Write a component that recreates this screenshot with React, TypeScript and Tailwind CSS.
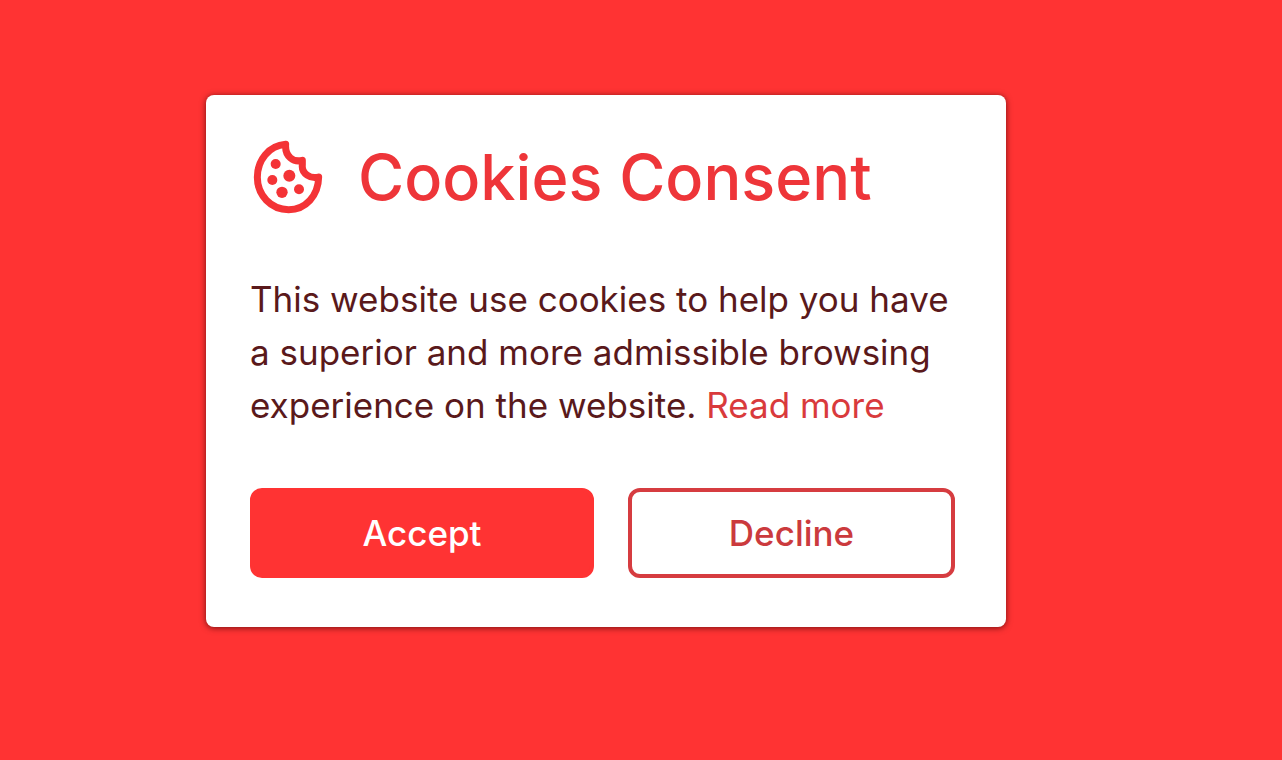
import type { ButtonHTMLAttributes } from "react";
import { clsx } from "clsx";

interface ConsentButtonProps extends ButtonHTMLAttributes<HTMLButtonElement> {
  variant: "primary" | "outline";
}

function ConsentButton({ variant, children, ...props }: ConsentButtonProps) {
  return (
    <button
      className={clsx(
        "h-[90px] cursor-pointer rounded-xl border-4 text-[35px] leading-none font-medium",
        variant === "primary" && "border-[#ff3333] bg-[#ff3333] text-white",
        variant === "outline" && "border-[#d63c40] bg-white text-[#cb3a3d]",
      )}
      type="button"
      {...props}
    >
      {children}
    </button>
  );
}

function CookieIcon() {
  return (
    <svg aria-hidden="true" className="h-[76px] w-[74px] shrink-0" fill="none" viewBox="168 162 222 228">
      <path
        d="M275 178C224 182 190 226 190 277C190 331 231 374 284 374C335 374 373 332 374 276C350 283 322 266 325 240L325 226C299 233 272 215 275 178Z"
        stroke="#f43336"
        strokeLinejoin="round"
        strokeWidth="21"
      />
      <g fill="#f43336">
        <circle cx="245" cy="237" r="15" />
        <circle cx="286" cy="272" r="18" />
        <circle cx="235" cy="285" r="15" />
        <circle cx="264" cy="322" r="17" />
        <circle cx="315" cy="313" r="15" />
      </g>
    </svg>
  );
}

export default function App() {
  return (
    <main className="min-h-screen bg-[#ff3333] pt-[95px] pr-[276px] pb-24 pl-[206px] font-['Inter',sans-serif]">
      <section
        aria-labelledby="consent-title"
        className="rounded-lg bg-white pt-[42px] pr-[51px] pb-[49px] pl-11 shadow-[0_1px_6px_rgba(60,0,0,0.7)]"
      >
        <header className="flex h-20 items-center gap-[34px]">
          <CookieIcon />
          <h1 className="text-[63px] leading-none font-medium whitespace-nowrap text-[#ee3539]" id="consent-title">
            Cookies Consent
          </h1>
        </header>

        <p className="mt-14 text-[35px] leading-[53px] text-[#5a191b]">
          This website use cookies to help you have a superior and more admissible browsing experience on the website.{" "}
          <a className="text-[#d93a3c]" href="#cookies">
            Read more
          </a>
        </p>

        <div className="mt-14 grid grid-cols-[344fr_327fr] gap-[34px]">
          <ConsentButton variant="primary">Accept</ConsentButton>
          <ConsentButton variant="outline">Decline</ConsentButton>
        </div>
      </section>
    </main>
  );
}
